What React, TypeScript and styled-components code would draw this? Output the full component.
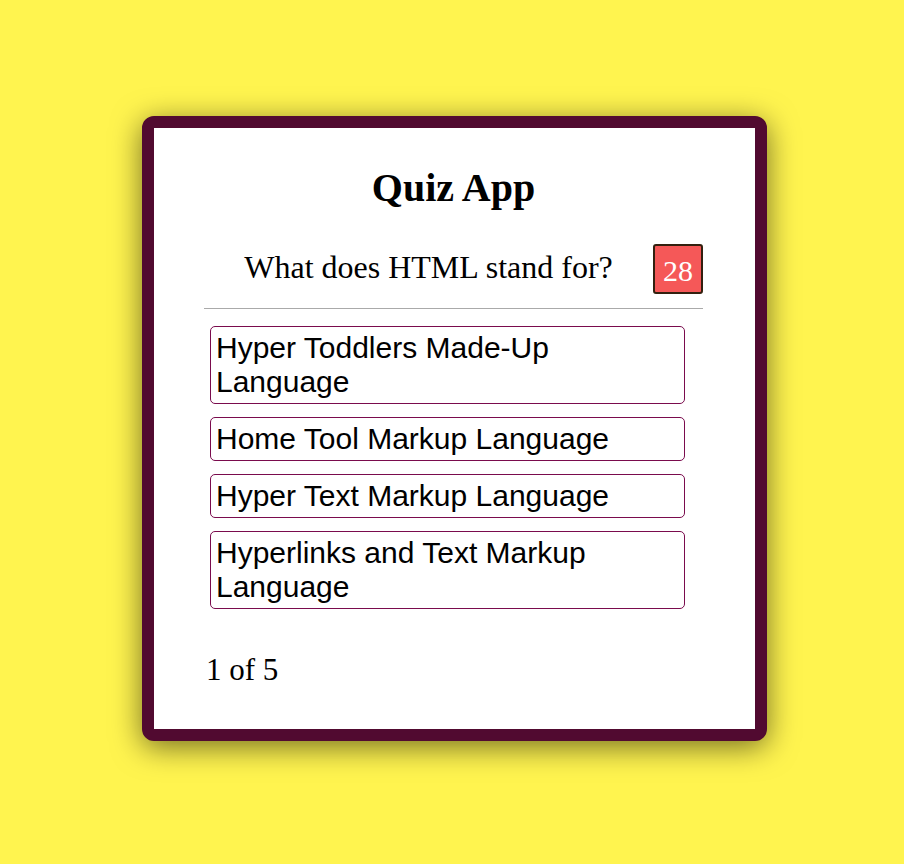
import styled, { createGlobalStyle } from 'styled-components';

const GlobalStyle = createGlobalStyle`
  html, body {
    margin: 0;
    padding: 0;
    background: #fff44f;
  }
  body {
    font-family: "Liberation Serif", "Times New Roman", serif;
  }
`;

const Page = styled.div`
  min-height: 864px;
  display: flex;
  align-items: flex-start;
  justify-content: center;
  padding: 116px 0 0 5px;
  box-sizing: border-box;
`;

const Card = styled.div`
  width: 625px;
  height: 625px;
  box-sizing: border-box;
  background: #fff;
  border: 12px solid #510a30;
  border-radius: 12px;
  box-shadow: 0 6px 30px rgba(0, 0, 0, 0.55);
  padding: 37px 52px 0 50px;
  display: flex;
  flex-direction: column;
`;

const Title = styled.h1`
  margin: 0;
  text-align: center;
  font-size: 40px;
  font-weight: bold;
  line-height: 45px;
`;

const QuestionRow = styled.div`
  display: flex;
  align-items: center;
  margin-top: 34px;
  padding-bottom: 14px;
  border-bottom: 1px solid #aaa;
`;

const Question = styled.div`
  flex: 1;
  text-align: center;
  font-size: 32px;
  line-height: 36px;
  padding-bottom: 4px;
`;

const Timer = styled.div`
  width: 50px;
  height: 50px;
  box-sizing: border-box;
  background: #f55858;
  border: 2px solid #33200f;
  border-radius: 3px;
  color: #fff;
  font-size: 30px;
  display: flex;
  align-items: center;
  justify-content: center;
  padding-top: 4px;
`;

const Options = styled.div`
  display: flex;
  flex-direction: column;
  gap: 13px;
  margin-top: 17px;
  padding-left: 6px;
`;

const Option = styled.div`
  width: 475px;
  box-sizing: border-box;
  border: 1px solid #7a0b4d;
  border-radius: 5px;
  padding: 4px 5px;
  font-family: "Liberation Sans", Arial, sans-serif;
  font-size: 30px;
  line-height: 34px;
  color: #000;
`;

const Progress = styled.div`
  margin-top: 44px;
  font-size: 31px;
  line-height: 34px;
  padding-left: 2px;
`;

const options = [
  'Hyper Toddlers Made-Up Language',
  'Home Tool Markup Language',
  'Hyper Text Markup Language',
  'Hyperlinks and Text Markup Language',
];

export default function App() {
  return (
    <>
      <GlobalStyle />
      <Page>
        <Card>
          <Title>Quiz App</Title>
          <QuestionRow>
            <Question>What does HTML stand for?</Question>
            <Timer>28</Timer>
          </QuestionRow>
          <Options>
            {options.map((o) => (
              <Option key={o}>{o}</Option>
            ))}
          </Options>
          <Progress>1 of 5</Progress>
        </Card>
      </Page>
    </>
  );
}
